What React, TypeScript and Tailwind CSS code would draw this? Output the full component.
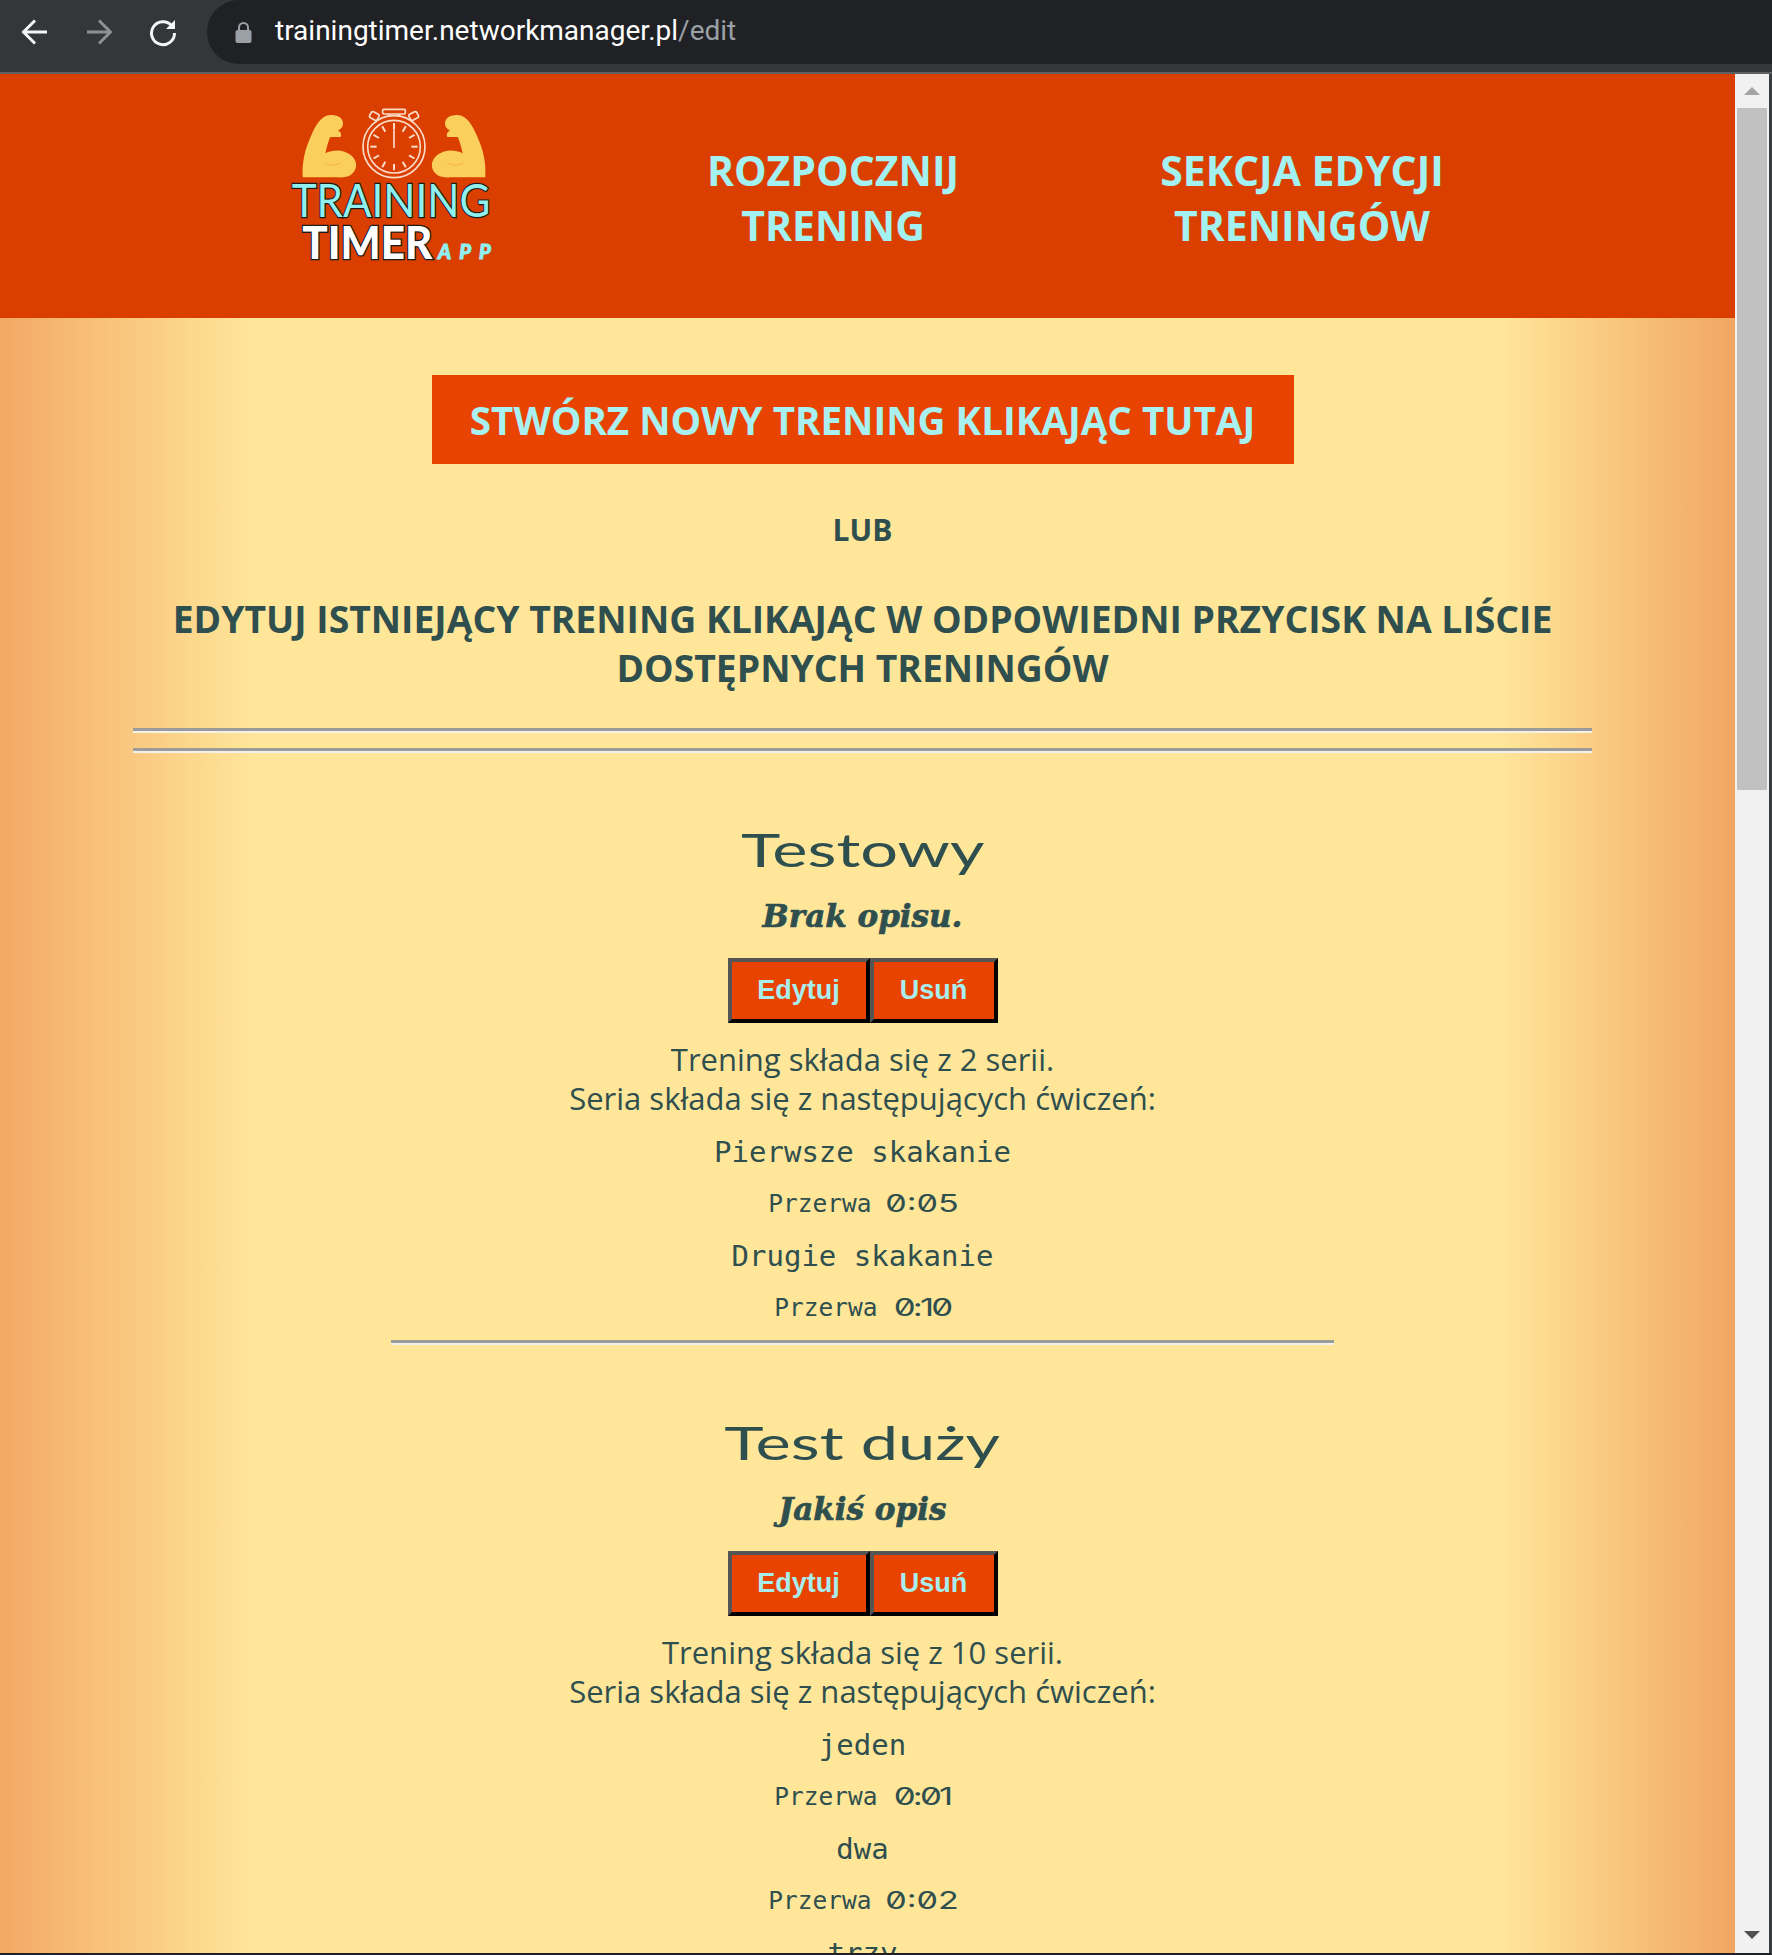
import React from "react";

const TEXT = "text-[#2f4f4f]";

function Logo() {
  const ticks = Array.from({ length: 12 }, (_, i) => i * 30);
  const arm =
    "M98 262 C96 215 104 180 122 140 C136 108 152 76 182 75 C206 74 220 86 219 102 C218 114 210 118 204 121 C212 126 216 134 212 141 C200 142 188 140 180 142 C174 158 170 172 166 190 C190 178 222 178 243 196 C262 212 264 236 246 252 C234 262 218 263 200 262 Z";
  return (
    <svg width="240" height="190" viewBox="0 0 720 570" className="block">
      <path d={arm} fill="#fbcf5c" />
      <path d="M165 218 C178 228 198 228 212 218" fill="none" stroke="#f4b040" strokeWidth="3" />
      <g transform="translate(744 0) scale(-1 1)">
        <path d={arm} fill="#fbcf5c" />
        <path d="M165 218 C178 228 198 228 212 218" fill="none" stroke="#f4b040" strokeWidth="3" />
      </g>
      <g fill="none" stroke="#fbdcc8" strokeWidth="5">
        <circle cx="372" cy="170" r="93" />
        <circle cx="372" cy="170" r="79" />
        <rect x="338" y="58" width="68" height="14" rx="3" />
        <path d="M356 72 V80 M388 72 V80" />
        <rect x="300" y="68" width="26" height="20" rx="5" transform="rotate(28 313 78)" />
        <rect x="418" y="68" width="26" height="20" rx="5" transform="rotate(-28 431 78)" />
        {ticks.map((a) => (
          <line key={a} x1="372" y1="99" x2="372" y2="118" strokeWidth="6" transform={`rotate(${a} 372 170)`} />
        ))}
        <line x1="372" y1="118" x2="372" y2="174" />
      </g>
      <text
        x="65"
        y="380"
        textLength="596"
        lengthAdjust="spacingAndGlyphs"
        fontFamily="Lato, sans-serif"
        fontWeight="400"
        fontSize="138"
        fill="#8ff0f0"
        stroke="#1b1b1b"
        strokeWidth="7"
        paintOrder="stroke"
      >
        TRAINING
      </text>
      <text
        x="97"
        y="507"
        textLength="390"
        lengthAdjust="spacingAndGlyphs"
        fontFamily="Lato, sans-serif"
        fontWeight="900"
        fontSize="138"
        fill="#ffffff"
        stroke="#1b1b1b"
        strokeWidth="8"
        paintOrder="stroke"
      >
        TIMER
      </text>
      <text
        x="504"
        y="507"
        textLength="158"
        fontFamily="Lato, sans-serif"
        fontWeight="900"
        fontStyle="italic"
        fontSize="60"
        fill="#8ff0f0"
        stroke="#8ff0f0"
        strokeWidth="3"
      >
        APP
      </text>
    </svg>
  );
}

function BrowserBar() {
  return (
    <div className="h-[74px] shrink-0 bg-[#35363a] border-b-2 border-[#5f6063] flex items-start">
      <div className="w-[207px] h-[64px] shrink-0 flex items-center">
        <svg width="30" height="28" viewBox="0 0 30 28" className="ml-[20px]" fill="none" stroke="#f4f5f6" strokeWidth="3">
          <path d="M27 14 H4 M15 2.5 L3.5 14 L15 25.5" />
        </svg>
        <svg width="30" height="28" viewBox="0 0 30 28" className="ml-[34px]" fill="none" stroke="#8e9094" strokeWidth="3">
          <path d="M3 14 H26 M15 2.5 L26.5 14 L15 25.5" />
        </svg>
        <svg width="30" height="30" viewBox="0 0 30 30" className="ml-[34px]" fill="none" stroke="#f4f5f6" strokeWidth="3">
          <path d="M24 9 A11.5 11.5 0 1 0 26.5 16" />
          <path d="M27 3 V12 H18 Z" fill="#f4f5f6" stroke="none" />
        </svg>
      </div>
      <div className="flex-1 h-[64px] bg-[#202124] rounded-l-[32px] flex items-center pl-[28px]">
        <svg width="17" height="22" viewBox="0 0 17 22" className="shrink-0">
          <path d="M4 10 V6.5 A4.5 4.5 0 0 1 13 6.5 V10" fill="none" stroke="#9aa0a6" strokeWidth="2" />
          <rect x="0.5" y="9" width="16" height="13" rx="2" fill="#9aa0a6" />
        </svg>
        <div className="ml-[23px] text-[28px] font-['Roboto',sans-serif] text-white leading-none pb-[2px]">
          trainingtimer.networkmanager.pl<span className="text-[#9aa0a6]">/edit</span>
        </div>
      </div>
    </div>
  );
}

function Scrollbar() {
  return (
    <div className="w-[37px] shrink-0 flex">
      <div className="w-[34px] bg-[#f1f1f1] flex flex-col items-center">
        <div className="h-[34px] w-full flex items-center justify-center shrink-0">
          <div className="w-0 h-0 border-x-[8px] border-x-transparent border-b-[8px] border-b-[#a3a3a3]" />
        </div>
        <div className="w-[30px] h-[682px] bg-[#c1c1c1] shrink-0" />
        <div className="flex-1" />
        <div className="h-[34px] w-full flex items-center justify-center shrink-0 pb-[2px]">
          <div className="w-0 h-0 border-x-[8px] border-x-transparent border-t-[8px] border-t-[#505050]" />
        </div>
      </div>
      <div className="w-[3px] bg-[#3a3b3e]" />
    </div>
  );
}

function PageHeader() {
  const nav = "w-[400px] text-center font-['Open_Sans',sans-serif] font-bold text-[41px] leading-[55px] text-[#a4f1f1]";
  return (
    <div className="h-[244px] shrink-0 bg-[#da3f00] flex items-start">
      <div className="ml-[270px] mt-[16px] shrink-0">
        <Logo />
      </div>
      <div className={`${nav} ml-[123px] mt-[69px]`}>
        ROZPOCZNIJ
        <br />
        TRENING
      </div>
      <div className={`${nav} ml-[69px] mt-[69px]`}>
        SEKCJA EDYCJI
        <br />
        TRENINGÓW
      </div>
    </div>
  );
}

function Button({ children, className }: { children: React.ReactNode; className: string }) {
  return (
    <div
      className={`${className} h-[65px] flex items-center justify-center bg-[#e84300] border-4 border-t-[#555555] border-l-[#555555] border-r-[#000000] border-b-[#000000] font-['Liberation_Sans',sans-serif] font-bold text-[27px] text-[#a9eeee]`}
    >
      {children}
    </div>
  );
}

function Pause({ time }: { time: string }) {
  const narrow = time.includes("1");
  return (
    <div className="h-[52px] flex items-center justify-center font-['DejaVu_Sans_Mono',monospace] leading-none">
      <span className="text-[24.5px]">Przerwa</span>
      <span
        className={`inline-block ml-[15px] text-center font-['Inter',sans-serif] font-normal slashed-zero text-[24px] ${
          narrow ? "w-[58px] tracking-[-2px] scale-x-[1.45]" : "w-[70px] scale-x-[1.42]"
        }`}
      >
        {time}
      </span>
    </div>
  );
}

function Exercise({ name }: { name: string }) {
  return (
    <div className="h-[52px] flex items-center justify-center font-['DejaVu_Sans_Mono',monospace] text-[29px] leading-none">
      {name}
    </div>
  );
}

function Workout({
  name,
  desc,
  series,
  items,
}: {
  name: string;
  desc: string;
  series: number;
  items: [string, string][];
}) {
  return (
    <div className="text-center">
      <div className="h-[73px] flex items-center justify-center font-['Lato',sans-serif] font-normal text-[47px] leading-none">
        <span className="inline-block scale-x-[1.42] pb-[2px]">{name}</span>
      </div>
      <div className="h-[58px] flex items-center justify-center font-['DejaVu_Serif',serif] font-bold italic text-[31px] leading-none [-webkit-text-stroke:0.7px_#2f4f4f]">
        {desc}
      </div>
      <div className="flex justify-center mt-[13px]">
        <Button className="w-[142px]">Edytuj</Button>
        <Button className="w-[128px]">Usuń</Button>
      </div>
      <div className="mt-[17px] font-['Open_Sans',sans-serif] text-[31px] leading-[39px]">
        Trening składa się z {series} serii.
        <br />
        Seria składa się z następujących ćwiczeń:
      </div>
      <div className="mt-[8px]">
        {items.map(([n, t]) => (
          <React.Fragment key={n}>
            <Exercise name={n} />
            <Pause time={t} />
          </React.Fragment>
        ))}
      </div>
    </div>
  );
}

function Hr({ className }: { className: string }) {
  return <div className={`${className} h-[5px] border-t-[3px] border-t-[#9b9b9b] border-b-2 border-b-[#f3f1ea]`} />;
}

export default function App() {
  return (
    <div className="w-[1772px] h-[1955px] overflow-hidden flex flex-col bg-[#202124] pb-[2px]">
      <BrowserBar />
      <div className="flex-1 flex min-h-0">
        <div className="w-[1735px] shrink-0 flex flex-col overflow-hidden">
          <PageHeader />
          <div
            className={`flex-1 min-h-0 overflow-hidden pl-[133px] pr-[143px] pt-[57px] ${TEXT} bg-[linear-gradient(to_right,#f3a864_0%,#ffe699_14.5%,#ffe699_86.5%,#f1a662_100%)]`}
          >
            <div className="flex justify-center">
              <div className="w-[862px] h-[89px] bg-[#e84300] flex items-center justify-center font-['Open_Sans',sans-serif] font-bold text-[38.6px] text-[#a9f0f0] leading-none pt-[2px]">
                STWÓRZ NOWY TRENING KLIKAJĄC TUTAJ
              </div>
            </div>
            <div className="mt-[46px] text-center font-['Open_Sans',sans-serif] font-bold text-[30px] leading-[40px]">LUB</div>
            <div className="mt-[44px] text-center font-['Open_Sans',sans-serif] font-bold text-[37.3px] leading-[49px]">
              EDYTUJ ISTNIEJĄCY TRENING KLIKAJĄC W ODPOWIEDNI PRZYCISK NA LIŚCIE
              <br />
              DOSTĘPNYCH TRENINGÓW
            </div>
            <Hr className="mt-[36px]" />
            <Hr className="mt-[15px]" />
            <div className="mt-[61px]">
              <Workout
                name="Testowy"
                desc="Brak opisu."
                series={2}
                items={[
                  ["Pierwsze skakanie", "0:05"],
                  ["Drugie skakanie", "0:10"],
                ]}
              />
            </div>
            <Hr className="w-[943px] mx-auto mt-[6px]" />
            <div className="mt-[62px]">
              <Workout
                name="Test duży"
                desc="Jakiś opis"
                series={10}
                items={[
                  ["jeden", "0:01"],
                  ["dwa", "0:02"],
                  ["trzy", "0:03"],
                ]}
              />
            </div>
          </div>
        </div>
        <Scrollbar />
      </div>
    </div>
  );
}
